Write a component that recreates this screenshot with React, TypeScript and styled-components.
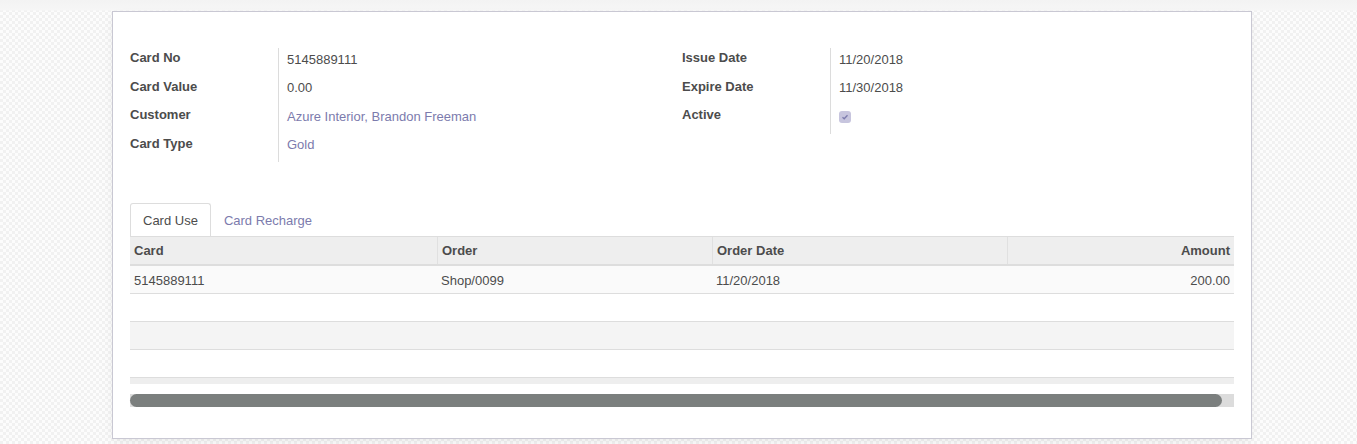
import React from "react";
import styled, { createGlobalStyle } from "styled-components";

const GlobalStyle = createGlobalStyle`
  html, body { margin: 0; padding: 0; }
  body {
    font-family: "Liberation Sans", Arial, Helvetica, sans-serif;
    font-size: 13px;
    color: #4c4c4c;
    background-color: #f9f9f9;
    background-image:
      linear-gradient(to bottom, #f3f3f3 0, #f6f6f6 10px, rgba(255,255,255,0) 11px),
      repeating-conic-gradient(#f1f1f1 0 25%, #fcfcfc 0 50%);
    background-size: 100% 100%, 6px 6px;
    background-repeat: no-repeat, repeat;
    min-height: 444px;
  }
`;

const Page = styled.div`
  padding: 11px 0 5px 112px;
  height: 444px;
  box-sizing: border-box;
`;

const Sheet = styled.div`
  width: 1140px;
  height: 428px;
  box-sizing: border-box;
  background: #fff;
  border: 1px solid #c9c8d3;
  box-shadow: 0 4px 10px -2px rgba(0, 0, 0, 0.08);
  padding: 36px 16px 0 17px;
`;

const Groups = styled.div`
  display: grid;
  grid-template-columns: 552px 552px;
`;

const Group = styled.div`
  display: grid;
  grid-template-columns: 149px 1fr;
  align-self: start;
`;

const Labels = styled.div`
  display: flex;
  flex-direction: column;
  border-right: 1px solid #dcdcdc;
`;

const Values = styled.div`
  display: flex;
  flex-direction: column;
  padding-left: 8px;
`;

const Label = styled.div`
  height: 28.5px;
  font-weight: bold;
  line-height: 20px;
  color: #4c4c4c;
`;

const Value = styled.div<{ $link?: boolean }>`
  height: 28.5px;
  line-height: 20px;
  padding-top: 1.5px;
  box-sizing: border-box;
  color: ${(p) => (p.$link ? "#7c7bad" : "#4c4c4c")};
`;

const Check = styled.span`
  display: inline-flex;
  align-items: center;
  justify-content: center;
  width: 12px;
  height: 12px;
  margin-top: 4px;
  border-radius: 3px;
  background: #c7c5de;
`;

const Tabs = styled.div`
  display: flex;
  margin-top: 41px;
  height: 33px;
  align-items: stretch;
`;

const Tab = styled.div<{ $active?: boolean }>`
  display: flex;
  align-items: center;
  padding: 1px 12px 0;
  height: 33px;
  box-sizing: border-box;
  border: 1px solid ${(p) => (p.$active ? "#dddddd" : "transparent")};
  border-bottom: none;
  border-radius: 3px 3px 0 0;
  color: ${(p) => (p.$active ? "#4c4c4c" : "#7c7bad")};
  background: #fff;
`;

const Table = styled.div`
  width: 1104px;
`;

const cols = "307px 275px 295px 227px";

const HeadRow = styled.div`
  display: grid;
  grid-template-columns: ${cols};
  height: 30px;
  box-sizing: border-box;
  background: #eeeeee;
  border-top: 1px solid #dddddd;
  border-bottom: 2px solid #dddddd;
`;

const HeadCell = styled.div<{ $right?: boolean; $first?: boolean }>`
  display: flex;
  align-items: center;
  justify-content: ${(p) => (p.$right ? "flex-end" : "flex-start")};
  padding: 0 4px;
  font-weight: bold;
  color: #4c4c4c;
  border-left: ${(p) => (p.$first ? "none" : "1px solid #e0e0e0")};
`;

const Row = styled.div<{ $bg: string }>`
  display: grid;
  grid-template-columns: ${cols};
  height: 28px;
  box-sizing: border-box;
  background: ${(p) => p.$bg};
  border-bottom: 1px solid #dddddd;
`;

const Cell = styled.div<{ $right?: boolean }>`
  display: flex;
  align-items: center;
  justify-content: ${(p) => (p.$right ? "flex-end" : "flex-start")};
  padding: 1px 4px 0;
  color: #4c4c4c;
`;

const Foot = styled.div`
  height: 6px;
  background: #eeeeee;
`;

const ScrollTrack = styled.div`
  margin-top: 10px;
  width: 1104px;
  height: 13px;
  background: #dcdcdc;
  display: flex;
`;

const ScrollThumb = styled.div`
  width: 1092px;
  height: 13px;
  border-radius: 7px;
  background: #7b7f7e;
`;

export default function App() {
  return (
    <>
      <GlobalStyle />
      <Page>
        <Sheet>
          <Groups>
            <Group>
              <Labels>
                <Label>Card No</Label>
                <Label>Card Value</Label>
                <Label>Customer</Label>
                <Label>Card Type</Label>
              </Labels>
              <Values>
                <Value>5145889111</Value>
                <Value>0.00</Value>
                <Value $link>Azure Interior, Brandon Freeman</Value>
                <Value $link>Gold</Value>
              </Values>
            </Group>
            <Group>
              <Labels>
                <Label>Issue Date</Label>
                <Label>Expire Date</Label>
                <Label>Active</Label>
              </Labels>
              <Values>
                <Value>11/20/2018</Value>
                <Value>11/30/2018</Value>
                <Value>
                  <Check>
                    <svg width="8" height="8" viewBox="0 0 8 8">
                      <path d="M1.5 4.3 L3.2 5.8 L6.5 2.2" fill="none" stroke="#7c7bad" strokeWidth="1.3" />
                    </svg>
                  </Check>
                </Value>
              </Values>
            </Group>
          </Groups>
          <Tabs>
            <Tab $active>Card Use</Tab>
            <Tab>Card Recharge</Tab>
          </Tabs>
          <Table>
            <HeadRow>
              <HeadCell $first>Card</HeadCell>
              <HeadCell>Order</HeadCell>
              <HeadCell>Order Date</HeadCell>
              <HeadCell $right>Amount</HeadCell>
            </HeadRow>
            <Row $bg="#fafafa">
              <Cell>5145889111</Cell>
              <Cell>Shop/0099</Cell>
              <Cell>11/20/2018</Cell>
              <Cell $right>200.00</Cell>
            </Row>
            <Row $bg="#ffffff" />
            <Row $bg="#f4f4f4" />
            <Row $bg="#ffffff" />
            <Foot />
          </Table>
          <ScrollTrack>
            <ScrollThumb />
          </ScrollTrack>
        </Sheet>
      </Page>
    </>
  );
}
